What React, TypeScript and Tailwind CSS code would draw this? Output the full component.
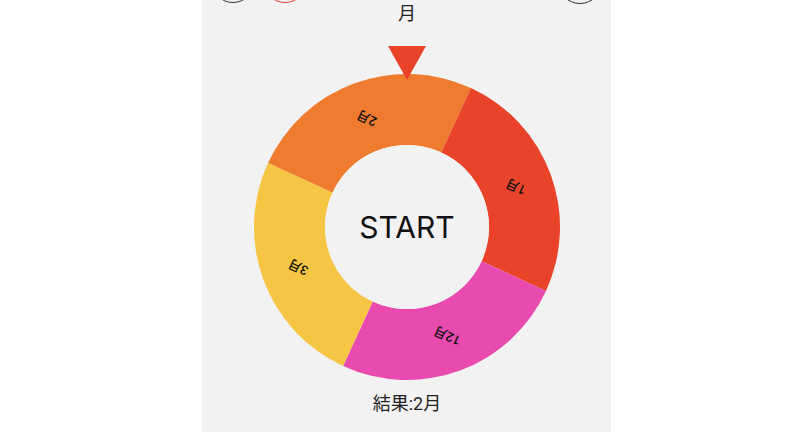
import React from "react";

const CX = 153;
const CY = 153;
const RO = 153;
const RI = 82;
const ROT = 204.7;

const segs = [
  { label: "2月", color: "#EF7B2F", start: -65.3 },
  { label: "1月", color: "#E9432A", start: 24.7 },
  { label: "12月", color: "#E84AAF", start: 114.7 },
  { label: "3月", color: "#F6C543", start: 204.7 },
];

function pt(r: number, a: number) {
  const rad = (a * Math.PI) / 180;
  return [CX + r * Math.sin(rad), CY - r * Math.cos(rad)];
}

function segPath(s: number, e: number) {
  const [x1, y1] = pt(RO, s);
  const [x2, y2] = pt(RO, e);
  const [x3, y3] = pt(RI, e);
  const [x4, y4] = pt(RI, s);
  return `M${x1} ${y1} A${RO} ${RO} 0 0 1 ${x2} ${y2} L${x3} ${y3} A${RI} ${RI} 0 0 0 ${x4} ${y4} Z`;
}

function Wheel() {
  return (
    <div className="relative w-[306px] h-[306px] -mt-[6px]">
      <svg width="306" height="306" viewBox="0 0 306 306" className="block">
        {segs.map((s) => (
          <path key={s.label} d={segPath(s.start, s.start + 90)} fill={s.color} />
        ))}
        <circle cx={CX} cy={CY} r={RI} fill="#F2F2F2" />
        {segs.map((s) => {
          const [x, y] = pt(116, s.start + 45);
          return (
            <text
              key={s.label + "t"}
              x={x}
              y={y}
              textAnchor="middle"
              dominantBaseline="central"
              fontSize="13"
              fontWeight="500"
              fill="#111"
              fontFamily="Roboto, 'Noto Sans CJK JP', sans-serif"
              transform={`rotate(${ROT} ${x} ${y})`}
            >
              {s.label}
            </text>
          );
        })}
      </svg>
      <div className="absolute inset-0 flex items-center justify-center">
        <span className="text-[30px] leading-none text-[#111] font-['Inter',sans-serif] pl-[1px]">
          START
        </span>
      </div>
    </div>
  );
}

export default function App() {
  return (
    <div className="w-[800px] h-[432px] bg-white overflow-hidden">
      <div className="ml-[202px] w-[409px] h-[432px] bg-[#F2F2F2] flex flex-col items-center font-['Roboto','Noto_Sans_CJK_JP',sans-serif]">
        <div className="w-full flex justify-between px-[9px] -mt-[41px]">
          <div className="flex gap-[8px]">
            <div className="w-[44px] h-[44px] rounded-full border border-[#333]" />
            <div className="w-[44px] h-[44px] rounded-full border border-[#E53935]" />
          </div>
          <div className="w-[44px] h-[44px] rounded-full border border-[#333] mt-[1px]" />
        </div>
        <div className="text-[18px] leading-[18px] text-[#222] mt-[1px] pl-[1px]">月</div>
        <div className="relative z-10 mt-[23px] w-0 h-0 border-l-[19px] border-r-[19px] border-t-[34px] border-l-transparent border-r-transparent border-t-[#E9432A] ml-[1px]" />
        <Wheel />
        <div className="mt-[12px] text-[18px] leading-[24px] text-[#222] pl-[1px]">結果:2月</div>
      </div>
    </div>
  );
}
